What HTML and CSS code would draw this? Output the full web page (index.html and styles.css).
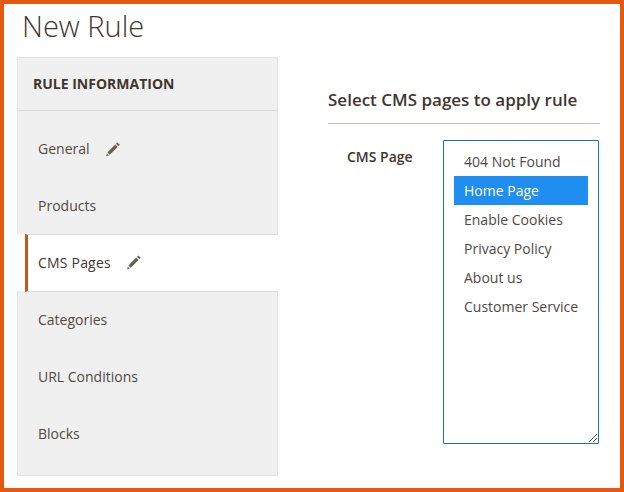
FILE: index.html
```html
<!DOCTYPE html>
<html lang="en">
<head>
  <meta charset="UTF-8">
  <title>New Rule</title>
  <link rel="stylesheet" href="styles.css">
</head>
<body>
  <div class="page">
    <h1 class="page-title">New Rule</h1>
    <div class="columns">
      <div class="sidebar">
        <div class="sidebar-title">RULE INFORMATION</div>
        <div class="tab first">General
          <svg class="pencil" viewBox="0 0 16 16"><path d="M12.4 1.4l2.4 2.4-1.4 1.4-2.4-2.4zM10.2 3.6l2.4 2.4-7.8 7.8-2.4-2.4zM1.9 12.5l1.9 1.9-2.8.9z"/></svg>
        </div>
        <div class="tab">Products</div>
        <div class="tab active">CMS Pages
          <svg class="pencil" viewBox="0 0 16 16"><path d="M12.4 1.4l2.4 2.4-1.4 1.4-2.4-2.4zM10.2 3.6l2.4 2.4-7.8 7.8-2.4-2.4zM1.9 12.5l1.9 1.9-2.8.9z"/></svg>
        </div>
        <div class="tab">Categories</div>
        <div class="tab">URL Conditions</div>
        <div class="tab last">Blocks</div>
      </div>
      <div class="content">
        <h2 class="section-title">Select CMS pages to apply rule</h2>
        <div class="field">
          <label class="field-label">CMS Page</label>
          <div class="multiselect">
            <div class="option">404 Not Found</div>
            <div class="option selected">Home Page</div>
            <div class="option">Enable Cookies</div>
            <div class="option">Privacy Policy</div>
            <div class="option">About us</div>
            <div class="option">Customer Service</div>
            <svg class="grip" viewBox="0 0 10 10"><path d="M1 9L9 1M5 9l4-4"/></svg>
          </div>
        </div>
      </div>
    </div>
  </div>
</body>
</html>
```
FILE: styles.css
```css
* {
  box-sizing: border-box;
}
html, body {
  margin: 0;
  height: 100%;
}
body {
  background: #fff;
  font-family: "Open Sans", sans-serif;
  color: #41362f;
}
.page {
  height: 492px;
  border: 4px solid #e2590f;
  padding: 0 20px 0 13px;
}
.page-title {
  margin: 0 0 0 5px;
  height: 53px;
  padding-top: 1px;
  font-size: 29px;
  font-weight: 300;
  line-height: 42px;
}
.columns {
  display: flex;
}
.sidebar {
  width: 261px;
  flex: none;
}
.sidebar-title {
  height: 54px;
  padding-left: 15px;
  background: #f0f0f0;
  border: 1px solid #e3e3e3;
  border-bottom-color: #dcdcdc;
  font-size: 14px;
  font-weight: 700;
  line-height: 52px;
}
.tab {
  display: flex;
  align-items: center;
  height: 57px;
  padding-left: 20px;
  background: #f0f0f0;
  border-left: 1px solid #e3e3e3;
  border-right: 1px solid #e3e3e3;
  font-size: 14px;
  color: #514943;
}
.tab.first {
  height: 66px;
  padding-top: 9px;
}
.tab.active {
  height: 58px;
  margin: 0 0 -1px 8px;
  padding-left: 10px;
  padding-bottom: 2px;
  background: #fff;
  border-left: 3px solid #c6561c;
  border-right: 0;
  border-top: 1px solid #dcdcdc;
  border-bottom: 1px solid #dcdcdc;
  color: #41362f;
  letter-spacing: .2px;
  position: relative;
}
.tab.last {
  height: 71px;
  padding-bottom: 14px;
  border-bottom: 1px solid #e3e3e3;
}
.pencil {
  width: 16px;
  height: 16px;
  margin-left: 15px;
  fill: #676056;
}
.content {
  flex: 1;
  padding: 30px 0 0 50px;
}
.section-title {
  margin: 0;
  height: 37px;
  border-bottom: 1px solid #cac3b4;
  font-size: 17px;
  font-weight: 600;
  line-height: 26px;
}
.field {
  display: flex;
  margin-top: 16px;
}
.field-label {
  width: 115px;
  padding: 7px 0 0 19px;
  font-size: 14px;
  font-weight: 600;
  color: #41362f;
  line-height: 20px;
}
.multiselect {
  position: relative;
  width: 156px;
  height: 304px;
  padding: 6px 10px;
  border: 1px solid #1b76b0;
  border-radius: 1px;
}
.option {
  height: 29px;
  padding-left: 10px;
  font-size: 14px;
  line-height: 29px;
  color: #514943;
}
.option.selected {
  background: #208df0;
  color: #fff;
}
.grip {
  position: absolute;
  right: 0;
  bottom: 0;
  width: 10px;
  height: 10px;
  fill: none;
  stroke: #555;
  stroke-width: 1;
}
```
